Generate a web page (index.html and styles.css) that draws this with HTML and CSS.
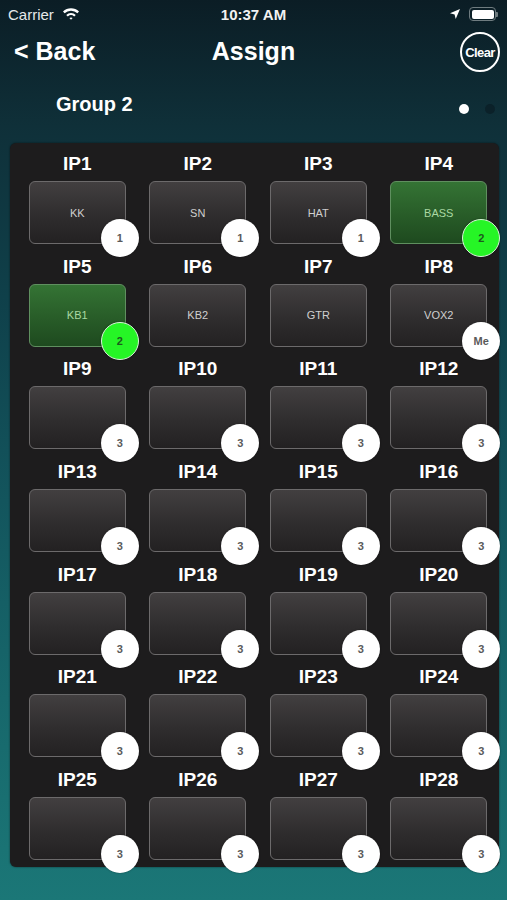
FILE: index.html
```html
<!DOCTYPE html>
<html>
<head>
<meta charset="utf-8">
<link rel="stylesheet" href="styles.css">
</head>
<body>
<div class="screen">
  <div class="status">
    <div class="status-left">
      <span class="carrier">Carrier</span>
      <svg class="wifi" width="18" height="13" viewBox="0 0 18 13">
        <path d="M1 4.6 A11.5 11.5 0 0 1 17 4.6 L15.4 6.3 A9.2 9.2 0 0 0 2.6 6.3 Z" fill="#fff"/>
        <path d="M4.2 7.9 A7 7 0 0 1 13.8 7.9 L12.2 9.6 A4.7 4.7 0 0 0 5.8 9.6 Z" fill="#fff"/>
        <path d="M7.4 11.1 A2.4 2.4 0 0 1 10.6 11.1 L9 12.8 Z" fill="#fff"/>
      </svg>
    </div>
    <div class="time">10:37 AM</div>
    <div class="status-right">
      <svg class="loc" width="10" height="10" viewBox="0 0 10 10">
        <path d="M10 0 L0 4.3 L4.6 5.4 L5.7 10 Z" fill="#fff"/>
      </svg>
      <div class="battery"><div class="battery-fill"></div></div>
      <div class="battery-nub"></div>
    </div>
  </div>

  <div class="nav">
    <div class="back">&lt; Back</div>
    <div class="title">Assign</div>
    <div class="clear">Clear</div>
  </div>

  <div class="group-row">
    <div class="group-name">Group 2</div>
    <div class="dots"><span class="dot on"></span><span class="dot"></span></div>
  </div>

  <div class="panel">
    <div class="grid">
      <div class="cell"><div class="lbl">IP1</div><div class="box"><span class="name">KK</span><span class="badge">1</span></div></div>
      <div class="cell"><div class="lbl">IP2</div><div class="box"><span class="name">SN</span><span class="badge">1</span></div></div>
      <div class="cell"><div class="lbl">IP3</div><div class="box"><span class="name">HAT</span><span class="badge">1</span></div></div>
      <div class="cell"><div class="lbl">IP4</div><div class="box green"><span class="name">BASS</span><span class="badge gbadge">2</span></div></div>
      <div class="cell"><div class="lbl">IP5</div><div class="box green"><span class="name">KB1</span><span class="badge gbadge">2</span></div></div>
      <div class="cell"><div class="lbl">IP6</div><div class="box"><span class="name">KB2</span></div></div>
      <div class="cell"><div class="lbl">IP7</div><div class="box"><span class="name">GTR</span></div></div>
      <div class="cell"><div class="lbl">IP8</div><div class="box"><span class="name">VOX2</span><span class="badge">Me</span></div></div>
      <div class="cell"><div class="lbl">IP9</div><div class="box"><span class="badge">3</span></div></div>
      <div class="cell"><div class="lbl">IP10</div><div class="box"><span class="badge">3</span></div></div>
      <div class="cell"><div class="lbl">IP11</div><div class="box"><span class="badge">3</span></div></div>
      <div class="cell"><div class="lbl">IP12</div><div class="box"><span class="badge">3</span></div></div>
      <div class="cell"><div class="lbl">IP13</div><div class="box"><span class="badge">3</span></div></div>
      <div class="cell"><div class="lbl">IP14</div><div class="box"><span class="badge">3</span></div></div>
      <div class="cell"><div class="lbl">IP15</div><div class="box"><span class="badge">3</span></div></div>
      <div class="cell"><div class="lbl">IP16</div><div class="box"><span class="badge">3</span></div></div>
      <div class="cell"><div class="lbl">IP17</div><div class="box"><span class="badge">3</span></div></div>
      <div class="cell"><div class="lbl">IP18</div><div class="box"><span class="badge">3</span></div></div>
      <div class="cell"><div class="lbl">IP19</div><div class="box"><span class="badge">3</span></div></div>
      <div class="cell"><div class="lbl">IP20</div><div class="box"><span class="badge">3</span></div></div>
      <div class="cell"><div class="lbl">IP21</div><div class="box"><span class="badge">3</span></div></div>
      <div class="cell"><div class="lbl">IP22</div><div class="box"><span class="badge">3</span></div></div>
      <div class="cell"><div class="lbl">IP23</div><div class="box"><span class="badge">3</span></div></div>
      <div class="cell"><div class="lbl">IP24</div><div class="box"><span class="badge">3</span></div></div>
      <div class="cell"><div class="lbl">IP25</div><div class="box"><span class="badge">3</span></div></div>
      <div class="cell"><div class="lbl">IP26</div><div class="box"><span class="badge">3</span></div></div>
      <div class="cell"><div class="lbl">IP27</div><div class="box"><span class="badge">3</span></div></div>
      <div class="cell"><div class="lbl">IP28</div><div class="box"><span class="badge">3</span></div></div>
    </div>
  </div>
</div>
</body>
</html>
```

FILE: styles.css
```css
* { box-sizing: border-box; }
html, body { margin: 0; padding: 0; }
body {
  width: 507px;
  height: 900px;
  overflow: hidden;
  font-family: "Liberation Sans", Arial, sans-serif;
  color: #fff;
}
.screen {
  width: 507px;
  height: 900px;
  background: linear-gradient(180deg, #0b1d25 0%, #0f3039 14%, #0f404a 33%, #125059 50%, #155f65 67%, #186b6e 83%, #1b7777 100%);
  display: flex;
  flex-direction: column;
}
.status {
  height: 28px;
  display: flex;
  align-items: center;
  justify-content: space-between;
  padding: 0 9px 0 8px;
  position: relative;
}
.status-left { display: flex; align-items: center; gap: 8px; }
.carrier { font-size: 15px; color: #e6e9ea; }
.wifi { margin-top: -2px; }
.time {
  position: absolute;
  left: 0; right: 0;
  text-align: center;
  font-size: 15px;
  font-weight: bold;
  color: #f2f2f2;
}
.status-right { display: flex; align-items: center; }
.loc { margin-right: 9px; }
.battery {
  width: 27px;
  height: 14px;
  border: 1.5px solid #6f7c80;
  border-radius: 4px;
  padding: 1.5px;
}
.battery-fill { width: 100%; height: 100%; background: #fff; border-radius: 2px; }
.battery-nub { width: 2px; height: 5px; background: #6f7c80; border-radius: 0 1px 1px 0; }

.nav {
  height: 46px;
  display: flex;
  align-items: center;
  justify-content: space-between;
  padding: 0 7px 0 14px;
  position: relative;
}
.back { font-size: 25px; font-weight: bold; }
.title {
  position: absolute;
  left: 0; right: 0;
  text-align: center;
  font-size: 25px;
  font-weight: bold;
  pointer-events: none;
}
.clear {
  width: 40px;
  height: 40px;
  border: 2px solid #fff;
  border-radius: 50%;
  display: flex;
  align-items: center;
  justify-content: center;
  font-size: 13px;
  font-weight: bold;
  letter-spacing: -0.6px;
  margin-top: 2px;
}
.group-row {
  height: 69px;
  display: flex;
  align-items: flex-start;
  justify-content: space-between;
  padding: 18px 12px 0 56px;
}
.group-name { font-size: 20px; font-weight: bold; line-height: 24px; }
.dots { display: flex; gap: 16px; margin-top: 12px; }
.dot { width: 10px; height: 10px; border-radius: 50%; background: #0b2129; }
.dot.on { background: #fff; }

.panel {
  margin: 0 8px 0 10px;
  background: #1d1c1d;
  border-radius: 6px;
  padding: 9px 0 7px 7px;
  box-shadow: 0 0 2px rgba(0,0,0,0.6);
}
.grid {
  display: grid;
  grid-template-columns: repeat(4, 120.5px);
  row-gap: 10.67px;
}
.cell {
  display: flex;
  flex-direction: column;
  align-items: center;
}
.lbl {
  font-size: 19px;
  font-weight: bold;
  line-height: 24px;
  height: 24px;
  margin-bottom: 5px;
}
.box {
  position: relative;
  width: 97px;
  height: 63px;
  border: 1.5px solid #6c6a6b;
  border-radius: 6px;
  background: linear-gradient(180deg, #423f40 0%, #2f2d2e 55%, #232122 100%);
  display: flex;
  align-items: center;
  justify-content: center;
}
.name { font-size: 11px; color: #cfcfcf; }
.box.green {
  background: linear-gradient(180deg, #347334 0%, #285c28 55%, #1e4a1f 100%);
  border-color: #5f8f5f;
}
.box.green .name { color: #a9d8a2; }
.badge {
  position: absolute;
  right: -14px;
  bottom: -14px;
  width: 38px;
  height: 38px;
  border-radius: 50%;
  background: #fff;
  color: #5a5a5a;
  font-size: 11px;
  font-weight: bold;
  display: flex;
  align-items: center;
  justify-content: center;
  box-shadow: 0 0 2px rgba(0,0,0,0.4);
}
.badge.gbadge {
  background: #26f526;
  color: #1d5a1d;
  border: 1.5px solid #d8f5d8;
}
```
